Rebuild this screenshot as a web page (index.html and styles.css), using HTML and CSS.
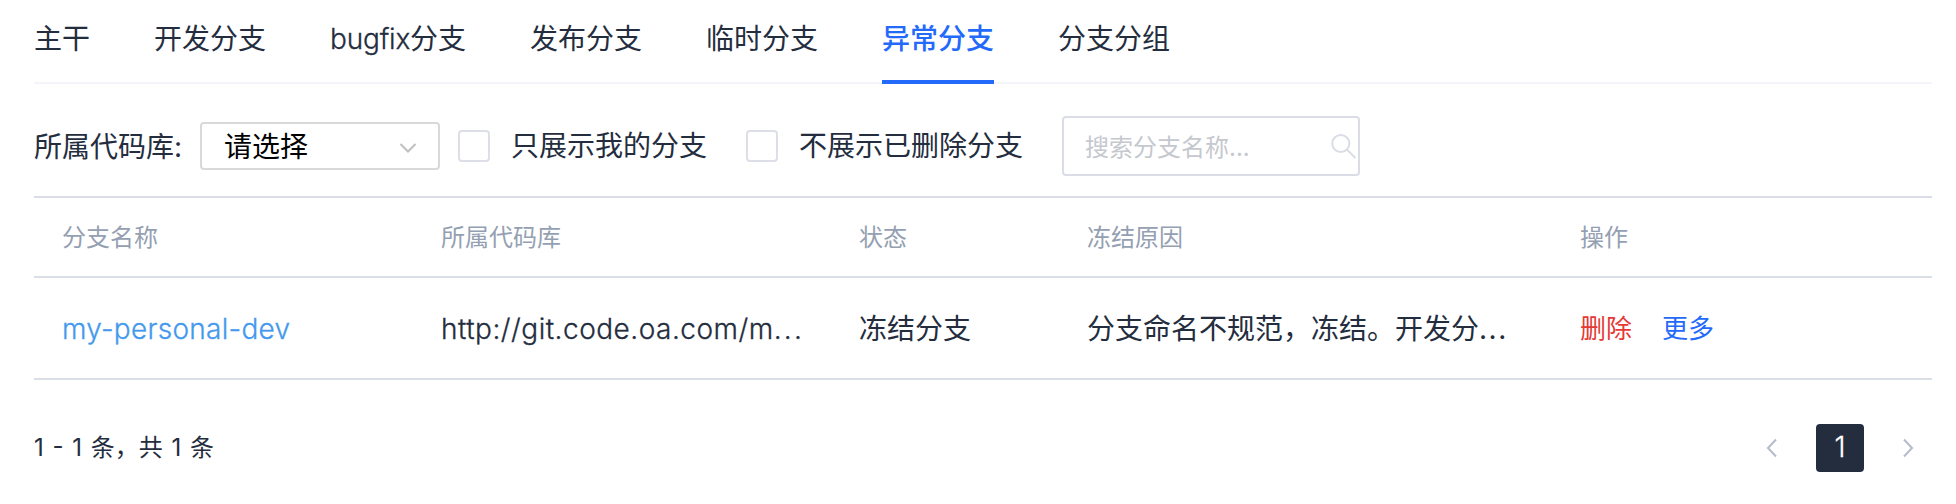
FILE: index.html
```html
<!DOCTYPE html>
<html lang="zh-CN">
<head>
<meta charset="utf-8">
<title>异常分支</title>
<link rel="stylesheet" href="styles.css">
</head>
<body>
<main class="page">
  <nav class="tabs">
    <a class="tab">主干</a>
    <a class="tab">开发分支</a>
    <a class="tab tab-mixed"><span class="latin">bugfix</span>分支</a>
    <a class="tab">发布分支</a>
    <a class="tab">临时分支</a>
    <a class="tab active">异常分支</a>
    <a class="tab">分支分组</a>
  </nav>
  <section class="filters">
    <span class="filter-label">所属代码库:</span>
    <div class="select">
      <span>请选择</span>
      <svg class="select-arrow" width="18" height="12" viewBox="0 0 18 12"><path d="M1.5 2 9 9.5 16.5 2"/></svg>
    </div>
    <label class="check check-mine"><span class="box"></span>只展示我的分支</label>
    <label class="check check-deleted"><span class="box"></span>不展示已删除分支</label>
    <div class="search">
      <span class="placeholder">搜索分支名称...</span>
      <svg class="search-icon" width="28" height="28" viewBox="0 0 28 28"><circle cx="11.8" cy="11.5" r="8.6"/><path d="M18 17.8 26.5 26"/></svg>
    </div>
  </section>
  <section class="table">
    <div class="row head">
      <span>分支名称</span><span>所属代码库</span><span>状态</span><span>冻结原因</span><span>操作</span>
    </div>
    <div class="row body">
      <a class="branch">my-personal-dev</a>
      <span class="repo">http://git.code.oa.com/m<span class="dots">...</span></span>
      <span>冻结分支</span>
      <span class="reason">分支命名不规范，冻结。开发分<span class="dots">...</span></span>
      <span class="actions"><a class="delete">删除</a><a class="more">更多</a></span>
    </div>
  </section>
  <footer class="footer">
    <span class="total">1 - 1 条，共 1 条</span>
    <div class="pager">
      <span class="pager-button"><svg width="12" height="20" viewBox="0 0 12 20"><path d="M10 1.5 2 10l8 8.5"/></svg></span>
      <span class="pager-button current">1</span>
      <span class="pager-button"><svg width="12" height="20" viewBox="0 0 12 20"><path d="m2 1.5 8 8.5-8 8.5"/></svg></span>
    </div>
  </footer>
</main>
</body>
</html>
```

FILE: styles.css
```css
* {
  box-sizing: border-box;
}

body {
  margin: 0;
  background: #fff;
  color: #242d3e;
  font: 400 28px/40px Inter, "Noto Sans CJK SC", sans-serif;
}

svg {
  display: block;
  fill: none;
  stroke-width: 2;
}

.page {
  width: 1932px;
  padding-left: 34px;
}

.tabs {
  display: flex;
  gap: 64px;
  height: 84px;
  border-bottom: 2px solid #f4f5fa;
}

.tab {
  height: 84px;
  padding-top: 19px;
  white-space: nowrap;
}

.tab-mixed {
  width: 136px;
}

.latin,
.branch,
.repo,
.current {
  font-weight: 300;
  -webkit-text-stroke: 0.3px currentColor;
}

.latin {
  letter-spacing: -0.2px;
}

.tab.active {
  border-bottom: 4px solid #236afa;
  color: #236afa;
  font-weight: 500;
}

.filters {
  display: flex;
  align-items: center;
  height: 112px;
  padding-top: 12px;
}

.filter-label {
  width: 166px;
  padding-top: 2px;
}

.select {
  display: flex;
  align-items: center;
  justify-content: space-between;
  width: 240px;
  height: 48px;
  padding: 2px 21px 0 22px;
  border: 2px solid #d9d9d9;
  border-radius: 4px;
  color: #000;
}

.select-arrow {
  margin-top: 2px;
  stroke: #bfbfbf;
}

.check {
  display: flex;
  align-items: center;
  gap: 21px;
  line-height: 42px;
  height: 40px;
}

.check-mine {
  margin-left: 18px;
}

.check-deleted {
  margin-left: 39px;
}

.box {
  width: 32px;
  height: 32px;
  border: 2px solid #dcdfe6;
  border-radius: 4px;
}

.search {
  display: flex;
  align-items: center;
  justify-content: space-between;
  width: 298px;
  height: 60px;
  margin-left: 39px;
  padding: 0 1px 0 21px;
  border: 2px solid #dadde5;
  border-radius: 4px;
}

.placeholder {
  padding-top: 3px;
  color: #c5c8ce;
  font-size: 24px;
}

.search-icon {
  stroke: #dadde5;
}

.table {
  border-top: 2px solid #dadde5;
}

.row {
  display: grid;
  grid-template-columns: 379px 418px 228px 493px 1fr;
  align-items: center;
  padding: 2px 0 0 28px;
  border-bottom: 2px solid #dadee5;
  white-space: nowrap;
}

.head {
  height: 80px;
  color: #959fb2;
  font-size: 24px;
}

.body {
  height: 102px;
}

.branch {
  color: #4599ed;
  letter-spacing: 0.25px;
}

.repo {
  letter-spacing: 0.5px;
}

.repo .dots {
  letter-spacing: 2.2px;
}

.reason .dots {
  letter-spacing: 1.5px;
}

.actions {
  display: flex;
  gap: 30px;
  font-size: 26px;
}

.delete {
  color: #e53935;
}

.more {
  color: #236afa;
}

.footer {
  display: flex;
  justify-content: space-between;
  padding-top: 44px;
}

.total {
  padding-top: 4px;
  font-size: 24px;
  word-spacing: 2px;
}

.pager {
  display: flex;
  gap: 20px;
}

.pager-button {
  display: flex;
  align-items: center;
  justify-content: center;
  width: 48px;
  height: 48px;
  border-radius: 4px;
  stroke: #b4bccc;
}

.current {
  padding-bottom: 2px;
  background: #242d3e;
  color: #fff;
}
```
